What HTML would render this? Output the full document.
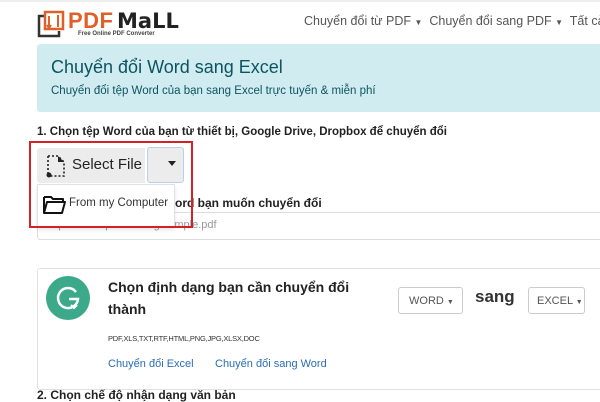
<!DOCTYPE html>
<html><head><meta charset="utf-8"><style>
*{margin:0;padding:0;box-sizing:border-box}
body{width:600px;height:400px;overflow:hidden;background:#fff;font-family:"Liberation Sans","DejaVu Sans",sans-serif;position:relative;color:#212529}
.a{position:absolute;white-space:nowrap}
</style></head><body>
<div class="a" style="left:0;top:0;width:600px;height:2px;background:#eee"></div>
<svg class="a" style="left:36px;top:10px" width="30" height="28" viewBox="0 0 30 28">
<path d="M8 6H3v20h20v-5" fill="none" stroke="#333" stroke-width="2.5"/>
<rect x="9" y="2" width="18" height="17" fill="none" stroke="#e0602a" stroke-width="2.5"/>
<path d="M13 6v12M11 15l2 3 2-3M22 17V5" stroke="#e0602a" stroke-width="2" fill="none"/>
</svg>
<div class="a" style="left:68px;top:8px;font-size:22px;font-weight:bold;color:#e0602a;letter-spacing:0.5px">PDF</div>
<div class="a" style="left:117px;top:9px;font-size:21px;font-weight:bold;color:#222;font-family:'DejaVu Sans',sans-serif">MaLL</div>
<div class="a" style="left:78px;top:31px;font-size:6px;font-weight:bold;color:#444">Free Online PDF Converter</div>
<div class="a" style="left:304px;top:14px;font-size:12.5px;color:#555">Chuyển đổi từ PDF <span style="font-size:8px">▼</span>&nbsp; Chuyển đổi sang PDF <span style="font-size:8px">▼</span>&nbsp; Tất cả</div>
<div class="a" style="left:37px;top:44px;width:570px;height:68px;background:#d1ecf1;border-radius:3px"></div>
<div class="a" style="left:51px;top:57px;font-size:18px;color:#0c5460">Chuyển đổi Word sang Excel</div>
<div class="a" style="left:51px;top:85px;font-size:11.5px;color:#0c5460">Chuyển đổi tệp Word của bạn sang Excel trực tuyến &amp; miễn phí</div>
<div class="a" style="left:37px;top:126px;font-size:11.5px;font-weight:bold;color:#222">1. Chọn tệp Word của bạn từ thiết bị, Google Drive, Dropbox để chuyển đổi</div>
<div class="a" style="left:37px;top:148px;width:108px;height:35px;background:#ececec;border-radius:3px 0 0 3px"></div>
<svg class="a" style="left:46px;top:153px" width="24" height="26" viewBox="0 0 24 26"><path d="M2 3h10l6 6v14H4" fill="none" stroke="#222" stroke-width="1.6" stroke-dasharray="2 2"/><path d="M2 3v18" stroke="#222" stroke-width="1.6" stroke-dasharray="2 2"/><path d="M12 3l6 6h-6z" fill="#222"/><circle cx="3" cy="22" r="2.5" fill="#222"/></svg>
<div class="a" style="left:72px;top:156px;font-size:15px;color:#222">Select File</div>
<div class="a" style="left:147px;top:147px;width:37px;height:36px;background:#ececec;border:1.5px solid #b8d0ec;border-radius:3px"></div>
<div class="a" style="left:168px;top:161px;width:0;height:0;border-left:4px solid transparent;border-right:4px solid transparent;border-top:5px solid #222"></div>
<div class="a" style="left:175px;top:196px;font-size:12px;font-weight:bold;color:#222">ord bạn muốn chuyển đổi</div>
<div class="a" style="left:37px;top:212px;width:570px;height:28px;border:1px solid #ddd;border-radius:3px"></div>
<div class="a" style="left:46px;top:219px;font-size:11px;color:#999">https://www.pdfmall.org/sample.pdf</div>
<div class="a" style="left:37px;top:184px;width:138px;height:44px;background:#fff;border:1px solid #e2e2e2;box-shadow:0 2px 4px rgba(0,0,0,.1)"></div>
<svg class="a" style="left:42px;top:194px" width="24" height="22" viewBox="0 0 24 22"><path d="M2 3h7l2 2h10v3M2 3v16h18l3-11H5L2 19" fill="none" stroke="#111" stroke-width="2" stroke-linejoin="round"/></svg>
<div class="a" style="left:69px;top:197px;font-size:11.5px;color:#333">From my Computer</div>
<div class="a" style="left:29px;top:141px;width:164px;height:87px;border:2.5px solid #d42027"></div>
<div class="a" style="left:37px;top:268px;width:570px;height:122px;border:1px solid #e2e2e2;border-radius:3px"></div>
<div class="a" style="left:46px;top:276px;width:44px;height:44px;border-radius:50%;background:#3caa8a"></div>
<svg class="a" style="left:54px;top:284px" width="28" height="28" viewBox="0 0 28 28"><path d="M22 8A10 10 0 1 0 24 15H15" fill="none" stroke="#fff" stroke-width="2.5"/><path d="M17 21l3 3 3-3" fill="none" stroke="#fff" stroke-width="2"/></svg>
<div class="a" style="left:108px;top:276px;font-size:14px;font-weight:bold;color:#222;line-height:22px">Chọn định dạng bạn cần chuyển đổi<br>thành</div>
<div class="a" style="left:398px;top:287px;width:65px;height:27px;border:1px solid #ccc;border-radius:3px;font-size:11px;color:#555;padding:7px 0 0 10px">WORD <span style="font-size:7px">▼</span></div>
<div class="a" style="left:475px;top:287px;font-size:17px;font-weight:bold;color:#333">sang</div>
<div class="a" style="left:528px;top:287px;width:57px;height:27px;border:1px solid #ccc;border-radius:3px;font-size:11px;color:#555;padding:7px 0 0 8px">EXCEL <span style="font-size:7px">▼</span></div>
<div class="a" style="left:108px;top:334px;font-size:7.5px;color:#333;letter-spacing:-0.2px">PDF,XLS,TXT,RTF,HTML,PNG,JPG,XLSX,DOC</div>
<div class="a" style="left:108px;top:358px;font-size:11px;color:#2a6db5">Chuyển đổi Excel</div>
<div class="a" style="left:215px;top:358px;font-size:11px;color:#2a6db5">Chuyển đổi sang Word</div>
<div class="a" style="left:37px;top:388px;font-size:12px;font-weight:bold;color:#222">2. Chọn chế độ nhận dạng văn bản</div>
</body></html>
